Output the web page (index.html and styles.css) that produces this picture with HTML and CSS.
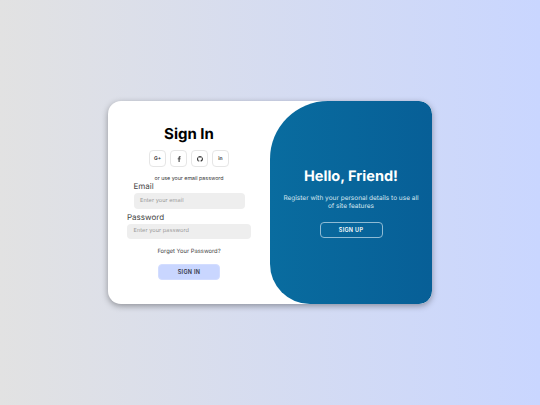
FILE: index.html
```html
<!DOCTYPE html>
<html lang="en">
<head>
<meta charset="utf-8">
<title>Sign In</title>
<link rel="stylesheet" href="styles.css">
</head>
<body>
<main class="card">
  <form class="form">
    <h1 class="title">Sign In</h1>
    <div class="socials">
      <a class="social"><span class="gplus">G+</span></a>
      <a class="social"><svg viewBox="0 0 10 10" width="6" height="6"><path d="M6 10V5.600h1.500L7.800 4H6V3c0-.5.2-.8.8-.8h1V.7C7.500.6 7.100.6 6.600.6 5.200.6 4.300 1.400 4.300 2.900V4H2.800v1.600h1.500V10z" fill="#333"/></svg></a>
      <a class="social"><svg viewBox="0 0 16 16" width="6" height="6"><path d="M8 0a8 8 0 0 0-2.500 15.600c.4.100.5-.2.500-.4v-1.400c-2.200.5-2.700-1-2.700-1-.4-.9-.9-1.200-.9-1.200-.7-.5.100-.5.100-.5.800.100 1.200.8 1.200.8.700 1.200 1.900.9 2.300.7.100-.5.300-.9.500-1.100-1.800-.2-3.600-.9-3.600-4 0-.9.300-1.600.8-2.100-.1-.2-.4-1 .100-2.100 0 0 .7-.2 2.200.8a7.600 7.600 0 0 1 4 0c1.500-1 2.200-.8 2.200-.8.400 1.100.200 1.900.100 2.100.5.600.8 1.300.8 2.100 0 3.100-1.900 3.700-3.700 3.900.3.300.6.800.6 1.500v2.200c0 .2.100.5.600.4A8 8 0 0 0 8 0z" fill="#333"/></svg></a>
      <a class="social"><span class="linkedin">in</span></a>
    </div>
    <p class="hint">or use your email password</p>
    <label class="field field-email">
      <span class="label">Email</span>
      <span class="input">Enter your email</span>
    </label>
    <label class="field field-password">
      <span class="label">Password</span>
      <span class="input">Enter your password</span>
    </label>
    <a class="forgot">Forget Your Password?</a>
    <button class="btn btn-primary" type="button">SIGN IN</button>
  </form>
  <section class="panel">
    <h2 class="panel-title">Hello, Friend!</h2>
    <p class="panel-text">Register with your personal details to use all of site features</p>
    <button class="btn btn-ghost" type="button">SIGN UP</button>
  </section>
</main>
</body>
</html>
```
FILE: styles.css
```css
* { box-sizing: border-box; }
html, body { height: 100%; }
body {
  margin: 0;
  display: flex;
  align-items: center;
  justify-content: center;
  background: linear-gradient(90deg, #e2e2e2, #c9d6ff);
  font-family: "Inter", "Liberation Sans", sans-serif;
  color: #222;
  text-rendering: geometricPrecision;
}
.card {
  width: 324px;
  height: 203px;
  display: flex;
  background: #fff;
  border-radius: 13px;
  box-shadow: 0 2px 6px rgba(0, 0, 0, .35);
  overflow: hidden;
}
.form {
  width: 162px;
  display: flex;
  flex-direction: column;
  align-items: center;
  padding-top: 24px;
}
.title {
  margin: 0;
  font-size: 15px;
  line-height: 18px;
  font-weight: 700;
  color: #000;
}
.socials {
  display: flex;
  gap: 4.500px;
  margin-top: 7px;
}
.social {
  width: 16.500px;
  height: 17px;
  display: flex;
  align-items: center;
  justify-content: center;
  border: 1px solid #e6e6e6;
  border-radius: 4px;
}
.gplus, .linkedin {
  font-size: 5px;
  font-weight: 600;
  color: #333;
}
.hint {
  margin: 9px 0 0;
  font-size: 5.300px;
  line-height: 7px;
  color: #333;
}
.field {
  display: flex;
  flex-direction: column;
}
.field-email { width: 111px; margin-top: -2px; }
.field-password { width: 124px; margin-top: 3px; }
.label {
  font-size: 8px;
  line-height: 10px;
  color: #444;
}
.input {
  height: 15.500px;
  margin-top: 2px;
  display: flex;
  align-items: center;
  padding: 0 6.500px;
  background: #eee;
  border-radius: 4px;
  font-size: 5.600px;
  letter-spacing: .05px;
  color: #999;
}
.forgot {
  margin-top: 9px;
  font-size: 5.800px;
  line-height: 8px;
  color: #444;
}
.btn {
  height: 16px;
  padding: 0;
  font-family: inherit;
  font-size: 5.500px;
  font-weight: 600;
  letter-spacing: .3px;
  border-radius: 4px;
}
.btn-primary {
  width: 62px;
  margin-top: 8px;
  border: 1px solid #d3ddff;
  background: #c9d6ff;
  color: #334;
}
.panel {
  width: 162px;
  display: flex;
  flex-direction: column;
  align-items: center;
  justify-content: center;
  padding: 0 11px;
  border-radius: 58px 13px 13px 40px;
  background: linear-gradient(90deg, #096c9f, #075f97);
  color: #fff;
}
.panel-title {
  margin: 0;
  font-size: 14.500px;
  line-height: 18px;
  font-weight: 700;
}
.panel-text {
  margin: 8px 0 0;
  font-size: 6.500px;
  line-height: 8.500px;
  text-align: center;
  color: #d6e6f0;
}
.btn-ghost {
  width: 63px;
  margin-top: 11px;
  border: 1px solid #8fbbd4;
  background: transparent;
  color: #fff;
}
```
